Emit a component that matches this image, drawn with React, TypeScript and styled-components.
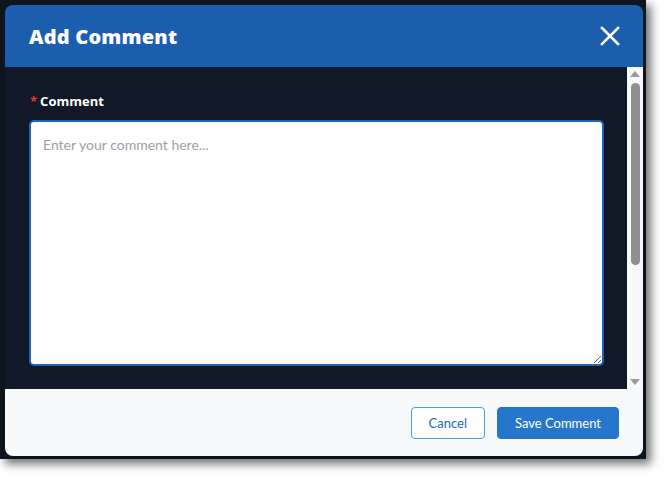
import React from "react";
import styled, { createGlobalStyle } from "styled-components";

const Global = createGlobalStyle`
  html, body { margin: 0; padding: 0; background: #ffffff; }
  body { width: 666px; height: 477px; overflow: hidden; font-family: "Open Sans", "Liberation Sans", sans-serif; }
`;

const Backdrop = styled.div`
  width: 646px;
  height: 459px;
  box-sizing: border-box;
  padding: 5px 3px 3px 5px;
  background: #0e141e;
  box-shadow: 5px 5px 9px rgba(0, 0, 0, 0.55);
  display: flex;
`;

const Modal = styled.div`
  flex: 1;
  display: flex;
  flex-direction: column;
  border-radius: 8px;
  overflow: hidden;
  background: #111827;
`;

const Header = styled.div`
  height: 62px;
  flex: none;
  background: #1b5ead;
  display: flex;
  align-items: center;
  justify-content: space-between;
  padding: 0 22px 0 24px;
`;

const Title = styled.h2`
  margin: 0;
  color: #ffffff;
  font-family: "Open Sans", sans-serif;
  font-weight: 800;
  font-size: 20px;
  letter-spacing: 0.2px;
`;

const CloseButton = styled.button`
  border: none;
  background: transparent;
  padding: 0;
  width: 22px;
  height: 22px;
  display: flex;
  align-items: center;
  justify-content: center;
  cursor: pointer;
`;

const BodyRow = styled.div`
  flex: 1;
  display: flex;
  min-height: 0;
`;

const Body = styled.div`
  flex: 1;
  padding: 25px 23px 23px 24px;
  display: flex;
  flex-direction: column;
`;

const Label = styled.label`
  display: flex;
  align-items: baseline;
  gap: 3px;
  color: #ffffff;
  font-family: "Open Sans", sans-serif;
  font-weight: 700;
  font-size: 13px;
  margin-bottom: 10px;
  padding-left: 1px;
`;

const Required = styled.span`
  color: #e0342f;
  font-size: 13px;
`;

const TextArea = styled.textarea`
  flex: 1;
  box-sizing: border-box;
  width: 100%;
  border: 2px solid #1e63b6;
  border-radius: 5px;
  background: #ffffff;
  padding: 14px 12px;
  font-family: "Lato", "Open Sans", sans-serif;
  font-size: 14px;
  color: #222;
  outline: none;
  resize: vertical;
  &::placeholder { color: #9aa0a8; }
`;

const Scrollbar = styled.div`
  width: 16px;
  flex: none;
  background: #f9f9f9;
  display: flex;
  flex-direction: column;
  align-items: center;
  padding: 4px 0;
  box-sizing: border-box;
`;

const Arrow = styled.div<{ $down?: boolean }>`
  width: 0;
  height: 0;
  border-left: 5px solid transparent;
  border-right: 5px solid transparent;
  ${(p) => (p.$down ? "border-top: 6px solid #9a9a9a;" : "border-bottom: 6px solid #9a9a9a;")}
`;

const Track = styled.div`
  flex: 1;
  width: 100%;
  display: flex;
  justify-content: center;
  padding-top: 6px;
`;

const Thumb = styled.div`
  width: 9px;
  height: 182px;
  border-radius: 5px;
  background: #8f8f8f;
`;

const Footer = styled.div`
  height: 67px;
  flex: none;
  background: #f8f9fa;
  display: flex;
  align-items: center;
  justify-content: flex-end;
  gap: 12px;
  padding: 0 24px 0 0;
  box-sizing: border-box;
`;

const Button = styled.button<{ $primary?: boolean }>`
  height: 32px;
  box-sizing: border-box;
  border-radius: 4px;
  font-family: "Lato", "Open Sans", sans-serif;
  font-size: 13px;
  padding: 0 17px;
  cursor: pointer;
  border: 1px solid ${(p) => (p.$primary ? "#2676cb" : "#3ea0ec")};
  background: ${(p) => (p.$primary ? "#2676cb" : "#ffffff")};
  color: ${(p) => (p.$primary ? "#ffffff" : "#2268b8")};
`;

export default function App() {
  return (
    <>
      <Global />
      <Backdrop>
        <Modal>
          <Header>
            <Title>Add Comment</Title>
            <CloseButton aria-label="Close">
              <svg width="20" height="20" viewBox="0 0 20 20">
                <path d="M2 2 L18 18 M18 2 L2 18" stroke="#ffffff" strokeWidth="2.6" strokeLinecap="square" />
              </svg>
            </CloseButton>
          </Header>
          <BodyRow>
            <Body>
              <Label>
                <Required>*</Required>
                Comment
              </Label>
              <TextArea placeholder="Enter your comment here..." />
            </Body>
            <Scrollbar>
              <Arrow />
              <Track>
                <Thumb />
              </Track>
              <Arrow $down />
            </Scrollbar>
          </BodyRow>
          <Footer>
            <Button>Cancel</Button>
            <Button $primary>Save Comment</Button>
          </Footer>
        </Modal>
      </Backdrop>
    </>
  );
}
